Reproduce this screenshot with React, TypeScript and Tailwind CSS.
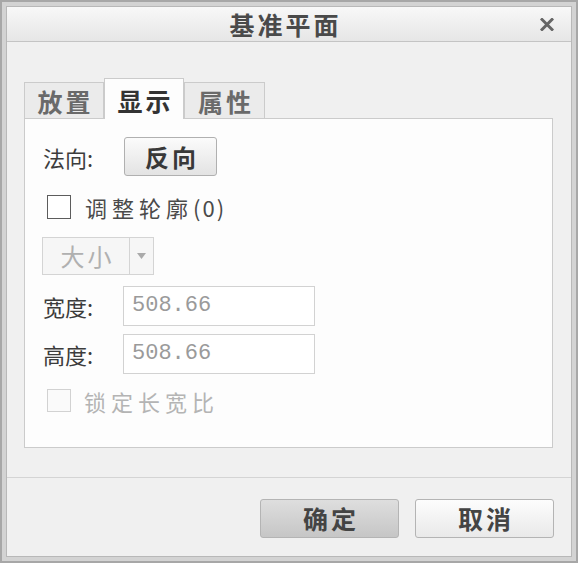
import { useState } from 'react';

const cjk = '"Noto Sans CJK SC", "Noto Sans", sans-serif';

function Tab({ label, active, width, onClick }: { label: string; active: boolean; width: string; onClick: () => void }) {
  return (
    <div
      onClick={onClick}
      className={`flex items-center justify-center border-x border-t border-[#cbcbcb] font-bold text-[25px] leading-none tracking-[3px] cursor-default ${width} ${
        active
          ? 'relative z-10 h-[41px] -mb-px bg-[#fdfdfd] text-[#333]'
          : 'h-[36px] bg-[#ebebeb] text-[#6a6a6a]'
      }`}
    >
      <span className="pl-[3px] pt-[2px]">{label}</span>
    </div>
  );
}

function Field({ label, value }: { label: string; value: string }) {
  return (
    <div className="flex items-center">
      <span className="w-[80px] text-[22px] leading-none text-[#3c3c3c]">{label}</span>
      <div className="flex h-[40px] w-[192px] items-center border border-[#d2d2d2] bg-white pl-[8px]">
        <span className="text-[22px] leading-none text-[#9a9a9a]" style={{ fontFamily: '"Liberation Mono", monospace' }}>
          {value}
        </span>
      </div>
    </div>
  );
}

export default function App() {
  const [tab, setTab] = useState(1);
  const [adjust, setAdjust] = useState(false);

  return (
    <div className="h-[563px] w-[578px] border-2 border-[#a7a7a7] bg-[#d3d3d3] p-[4px]" style={{ fontFamily: cjk }}>
      <div className="flex h-full flex-col border border-[#b8b8b8] bg-[#f0f0f0]">
        {/* Title bar */}
        <div className="flex h-[35px] shrink-0 items-center border-b border-[#c4c4c4] bg-gradient-to-b from-[#f8f8f8] to-[#e6e6e6]">
          <div className="w-[33px]" />
          <div className="flex-1 text-center text-[25px] font-bold leading-none tracking-[3px] text-[#4a4a4a]">基准平面</div>
          <div className="flex w-[40px] items-center justify-start pl-[9px]">
            <svg width="14" height="13" viewBox="0 0 14 13">
              <path d="M2 1.5 L12 11.5 M12 1.5 L2 11.5" stroke="#666" strokeWidth="3" strokeLinecap="square" />
            </svg>
          </div>
        </div>

        {/* Body */}
        <div className="flex flex-1 flex-col pl-[17px] pr-[18px] pt-[36px] pb-[29px]">
          <div className="flex h-[40px] items-end">
            <Tab label="放置" active={tab === 0} width="w-[80px]" onClick={() => setTab(0)} />
            <Tab label="显示" active={tab === 1} width="w-[80px]" onClick={() => setTab(1)} />
            <Tab label="属性" active={tab === 2} width="w-[81px]" onClick={() => setTab(2)} />
          </div>
          <div className="flex flex-1 flex-col border border-[#cbcbcb] bg-[#fdfdfd] pl-[18px] pt-[18px]">
            {/* 法向 */}
            <div className="flex items-center">
              <span className="w-[81px] text-[22px] leading-none text-[#3c3c3c]">法向:</span>
              <button className="flex h-[39px] w-[93px] items-center justify-center rounded-[3px] border border-[#b0b0b0] bg-gradient-to-b from-[#fbfbfb] to-[#e3e3e3] text-[24px] font-bold leading-none tracking-[3px] text-[#383838]">
                <span className="pl-[3px]">反向</span>
              </button>
            </div>

            {/* 调整轮廓 */}
            <div className="mt-[19px] flex items-center pl-[4px]" onClick={() => setAdjust(!adjust)}>
              <div className="flex h-[24px] w-[24px] items-center justify-center border-[1.5px] border-[#5c5c5c] bg-white text-[16px] leading-none">
                {adjust ? '✓' : ''}
              </div>
              <span className="ml-[14px] text-[22px] leading-none text-[#4a4a4a]">
                <span className="tracking-[5px]">调整轮廓</span>
                <span className="tracking-[2px]">(0)</span>
              </span>
            </div>

            {/* 大小 */}
            <div className="mt-[18px] flex h-[38px] w-[112px] -ml-[1px] items-stretch border border-[#d4d4d4] bg-[#f6f6f6]">
              <div className="flex w-[87px] items-center justify-center border-r border-[#d4d4d4] text-[24px] leading-none tracking-[3px] text-[#b0b0b0]">
                <span className="pl-[3px]">大小</span>
              </div>
              <div className="flex flex-1 items-center justify-center">
                <svg width="9" height="6" viewBox="0 0 9 6">
                  <path d="M0 0 L9 0 L4.5 6 Z" fill="#aaaaaa" />
                </svg>
              </div>
            </div>

            {/* 宽度 / 高度 */}
            <div className="mt-[11px]">
              <Field label="宽度:" value="508.66" />
            </div>
            <div className="mt-[8px]">
              <Field label="高度:" value="508.66" />
            </div>

            {/* 锁定长宽比 */}
            <div className="mt-[15px] flex items-center pl-[4px]">
              <div className="h-[23px] w-[24px] border-[1.5px] border-[#d2d2d2] bg-[#fafafa]" />
              <span className="ml-[13px] text-[22px] leading-none tracking-[5px] text-[#b4b4b4]">锁定长宽比</span>
            </div>
          </div>
        </div>

        {/* Footer */}
        <div className="flex h-[79px] shrink-0 items-start justify-end gap-[16px] border-t border-[#d4d4d4] pr-[17px] pt-[21px]">
          <button className="flex h-[39px] w-[139px] items-center justify-center rounded-[3px] border border-[#b4b4b4] bg-gradient-to-b from-[#dedede] to-[#c6c6c6] text-[25px] font-bold leading-none tracking-[3px] text-[#444]">
            <span className="pl-[3px]">确定</span>
          </button>
          <button className="flex h-[39px] w-[139px] items-center justify-center rounded-[3px] border border-[#b4b4b4] bg-gradient-to-b from-[#fdfdfd] to-[#e9e9e9] text-[25px] font-bold leading-none tracking-[3px] text-[#444]">
            <span className="pl-[3px]">取消</span>
          </button>
        </div>
      </div>
    </div>
  );
}
